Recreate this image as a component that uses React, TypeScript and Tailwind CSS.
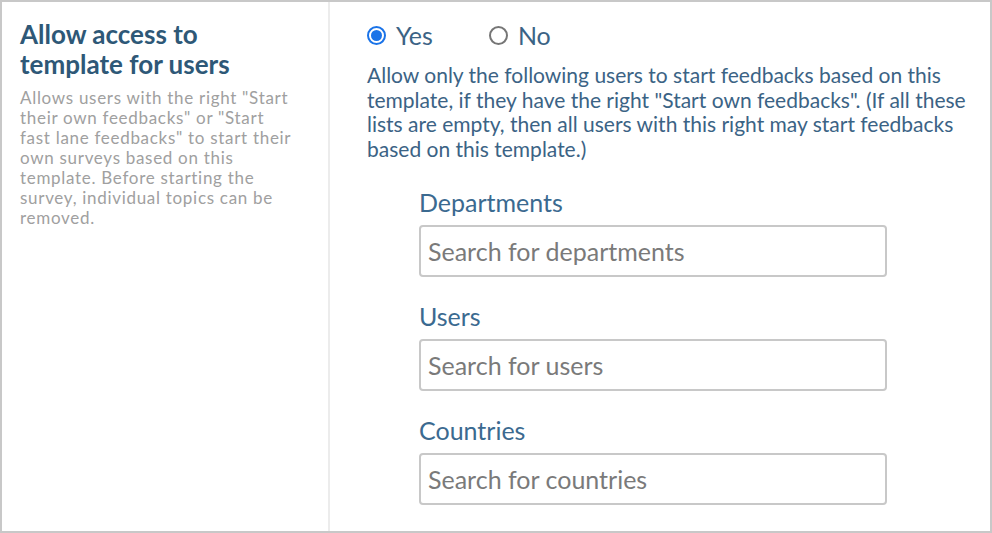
import { useState } from "react";

const font = { fontFamily: "Lato, 'Open Sans', sans-serif" };

type Field = { label: string; placeholder: string };

const fields: Field[] = [
  { label: "Departments", placeholder: "Search for departments" },
  { label: "Users", placeholder: "Search for users" },
  { label: "Countries", placeholder: "Search for countries" },
];

const Radio = ({ checked, label, onClick }: { checked: boolean; label: string; onClick: () => void }) => (
  <button type="button" onClick={onClick} className="flex items-center gap-[10px] cursor-pointer">
    {checked ? (
      <span className="w-[19px] h-[19px] rounded-full border-2 border-[#1a73e8] flex items-center justify-center">
        <span className="w-[11px] h-[11px] rounded-full bg-[#1a73e8]" />
      </span>
    ) : (
      <span className="w-[19px] h-[19px] rounded-full border-2 border-[#767676]" />
    )}
    <span className="text-[25px] leading-[30px] text-[#3b6385]">{label}</span>
  </button>
);

export default function App() {
  const [allow, setAllow] = useState(true);

  return (
    <div style={font} className="w-[992px] h-[533px] bg-white border-2 border-[#c8c8c8] flex">
      {/* left: setting title and help text */}
      <div className="w-[328px] shrink-0 border-r-2 border-[#ececec] pl-[18px] pr-[32px] pt-[17px]">
        <h2 className="text-[26px] leading-[30px] font-bold text-[#2e5877]">
          Allow access to template for users
        </h2>
        <p className="mt-[9px] text-[17px] leading-[20px] tracking-[0.7px] text-[#a0a0a0]">
          Allows users with the right "Start their own feedbacks" or "Start fast lane feedbacks" to start their own
          surveys based on this template. Before starting the survey, individual topics can be removed.
        </p>
      </div>

      {/* right: yes/no and restriction lists */}
      <div className="flex-1 pl-[37px] pt-[18px]">
        <div className="flex items-center gap-[56px]">
          <Radio checked={allow} label="Yes" onClick={() => setAllow(true)} />
          <Radio checked={!allow} label="No" onClick={() => setAllow(false)} />
        </div>
        <p className="mt-[13px] w-[605px] text-[21px] leading-[24.5px] text-[#3b6385]">
          Allow only the following users to start feedbacks based on this template, if they have the right "Start own
          feedbacks". (If all these lists are empty, then all users with this right may start feedbacks based on this
          template.)
        </p>
        <div className="pl-[52px] mt-[26px] flex flex-col gap-[24px]">
          {fields.map((f) => (
            <div key={f.label} className="flex flex-col gap-[8px]">
              <label className="text-[25px] leading-[30px] text-[#3b6a90]">{f.label}</label>
              <input
                type="text"
                placeholder={f.placeholder}
                className="w-[468px] h-[52px] rounded-[4px] border-2 border-[#c8c8c8] px-[7px] text-[25px] text-[#555] placeholder:text-[#7a7a7a] outline-none"
                style={font}
              />
            </div>
          ))}
        </div>
      </div>
    </div>
  );
}
